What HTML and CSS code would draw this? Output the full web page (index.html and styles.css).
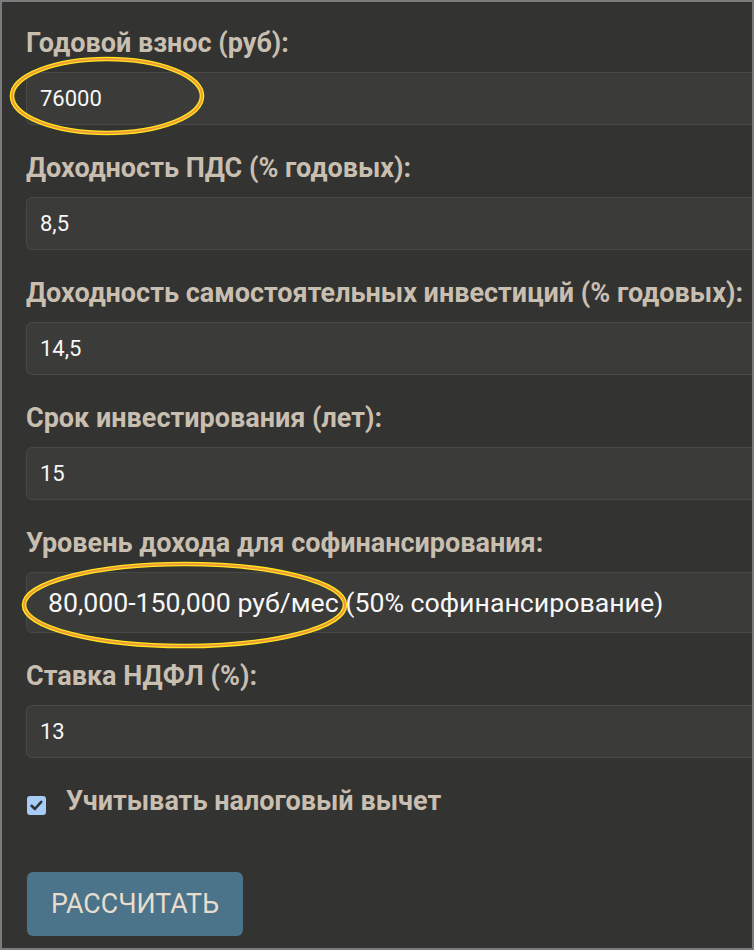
FILE: index.html
```html
<!DOCTYPE html>
<html lang="ru">
<head>
<meta charset="utf-8">
<title>Калькулятор ПДС</title>
<link rel="stylesheet" href="styles.css">
</head>
<body>
<div class="frame">
  <form class="form">
    <div class="field">
      <label class="label" for="f1">Годовой взнос (руб):</label>
      <input class="input" id="f1" type="text" value="76000">
    </div>
    <div class="field">
      <label class="label" for="f2">Доходность ПДС (% годовых):</label>
      <input class="input" id="f2" type="text" value="8,5">
    </div>
    <div class="field">
      <label class="label" for="f3">Доходность самостоятельных инвестиций (% годовых):</label>
      <input class="input" id="f3" type="text" value="14,5">
    </div>
    <div class="field">
      <label class="label" for="f4">Срок инвестирования (лет):</label>
      <input class="input" id="f4" type="text" value="15">
    </div>
    <div class="field">
      <label class="label" for="f5">Уровень дохода для софинансирования:</label>
      <select class="select" id="f5">
        <option selected>80,000-150,000 руб/мес (50% софинансирование)</option>
      </select>
    </div>
    <div class="field">
      <label class="label" for="f6">Ставка НДФЛ (%):</label>
      <input class="input" id="f6" type="text" value="13">
    </div>
    <div class="check-row">
      <span class="checkbox"><svg width="19" height="19" viewBox="0 0 19 19"><path d="M4.6 9.8 L7.9 13 L14.2 5.8" fill="none" stroke="#2f3338" stroke-width="2.6" stroke-linecap="round" stroke-linejoin="round"/></svg></span>
      <span class="check-label">Учитывать налоговый вычет</span>
    </div>
    <button class="btn" type="button">РАССЧИТАТЬ</button>
  </form>
  <svg class="marks" width="754" height="950" viewBox="0 0 754 950">
    <ellipse cx="107" cy="96" rx="95" ry="37" fill="none" stroke="#ffe81a" stroke-width="4.6"/>
    <ellipse cx="107" cy="96" rx="95" ry="37" fill="none" stroke="#f0983a" stroke-width="2"/>
    <ellipse cx="184.5" cy="605" rx="160.5" ry="41" fill="none" stroke="#ffe81a" stroke-width="4.6"/>
    <ellipse cx="184.5" cy="605" rx="160.5" ry="41" fill="none" stroke="#f0983a" stroke-width="2"/>
  </svg>
</div>
</body>
</html>
```
FILE: styles.css
```css
html, body {
  margin: 0;
  padding: 0;
  background: #333331;
}
.frame {
  position: relative;
  width: 754px;
  height: 950px;
  box-sizing: border-box;
  border: 2px solid #7c7c7c;
  background: #333331;
  overflow: hidden;
  font-family: Roboto, "Liberation Sans", sans-serif;
}
.form {
  padding: 26px 0 0 24px;
  width: 820px;
}
.field {
  display: flex;
  flex-direction: column;
  margin-bottom: 28px;
}
.label {
  display: block;
  font-size: 27px;
  line-height: 31px;
  font-weight: 700;
  color: #c9bfb1;
  margin-bottom: 13px;
}
.input {
  box-sizing: border-box;
  width: 800px;
  height: 53px;
  padding: 0 0 0 13px;
  margin: 0;
  background: #3b3b3a;
  border: 1px solid #484847;
  border-radius: 6px;
  color: #f7f7f7;
  font-family: Roboto, "Liberation Sans", sans-serif;
  font-size: 22px;
  outline: none;
}
.select {
  -webkit-appearance: none;
  appearance: none;
  box-sizing: border-box;
  width: 800px;
  height: 61px;
  padding: 0 0 0 21px;
  margin: 0;
  background: #3b3b3a;
  border: 1px solid #484847;
  border-radius: 6px;
  color: #f7f7f7;
  font-family: Roboto, "Liberation Sans", sans-serif;
  font-size: 26.7px;
  outline: none;
}
.check-row {
  display: flex;
  align-items: center;
  gap: 20px;
  height: 31px;
  padding-left: 1px;
}
.checkbox {
  display: flex;
  width: 19px;
  height: 19px;
  margin-top: 8px;
  background: #a7cdf6;
  border-radius: 3px;
}
.check-label {
  font-size: 27px;
  line-height: 31px;
  font-weight: 700;
  color: #c9bfb1;
}
.btn {
  display: block;
  margin: 55px 0 0 1px;
  width: 216px;
  height: 64px;
  padding: 0;
  border: none;
  border-radius: 6px;
  background: #4b7389;
  color: #e7ddce;
  font-family: Roboto, "Liberation Sans", sans-serif;
  font-size: 26.8px;
  font-weight: 400;
}
.marks {
  position: absolute;
  left: -2px;
  top: -2px;
  pointer-events: none;
}
```
